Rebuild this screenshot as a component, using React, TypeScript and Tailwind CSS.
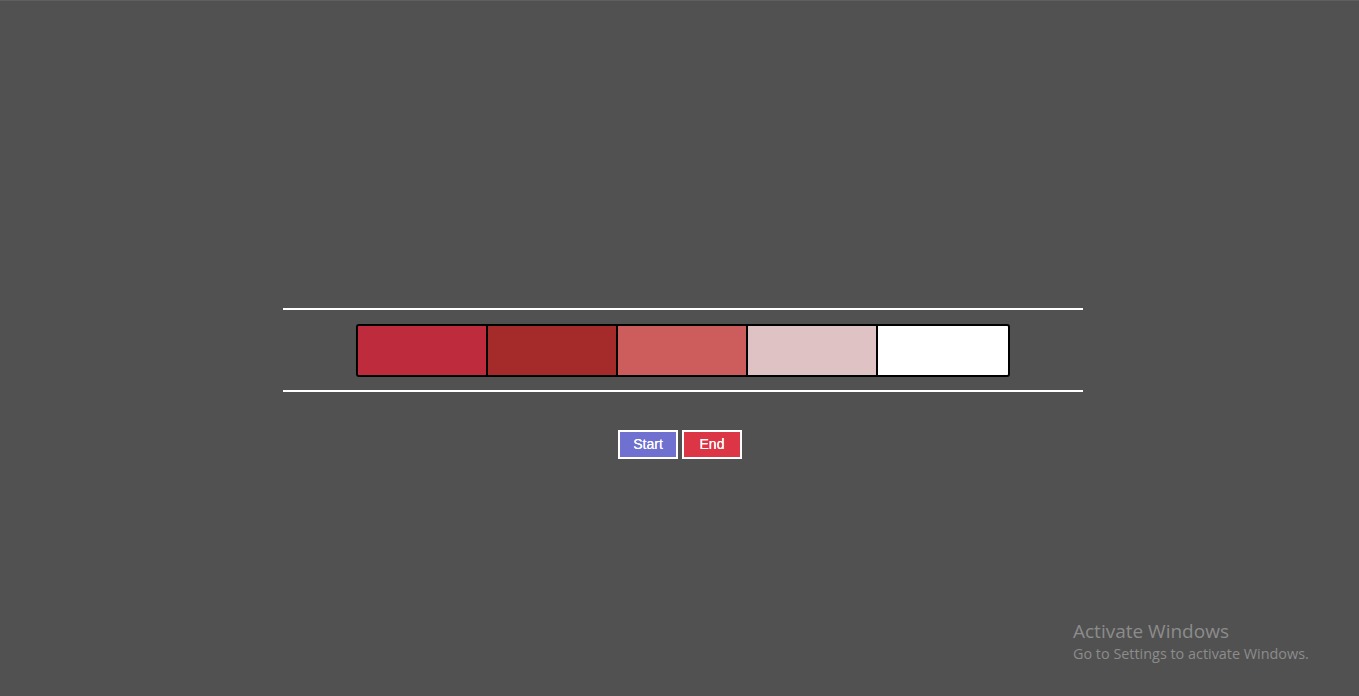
import React from "react";

const swatches = ["#be2b3c", "#a52a2a", "#cd5c5c", "#dec2c4", "#ffffff"];
const widths = ["w-[128px]", "w-[130px]", "w-[130px]", "w-[130px]", "flex-1"];

export default function App() {
  return (
    <div
      className="relative h-[696px] w-full overflow-hidden bg-[#515151] border-t border-[#5f5f5f]"
      style={{ fontFamily: '"Liberation Sans", Arial, sans-serif' }}
    >
      <div className="flex flex-col pt-[307px]">
        <div className="ml-[283px] h-[2px] w-[800px] bg-white" />
        <div className="ml-[356px] mt-[14px] flex h-[53px] w-[654px] overflow-hidden rounded-[3px] border-2 border-black">
          {swatches.map((c, i) => (
            <div
              key={c}
              className={i === 0 ? `shrink-0 ${widths[i]}` : `shrink-0 border-l-2 border-black ${widths[i]}`}
              style={{ backgroundColor: c }}
            />
          ))}
        </div>
        <div className="ml-[283px] mt-[13px] h-[2px] w-[800px] bg-white" />
        <div className="ml-[618px] mt-[38px] flex gap-[4px]">
          <button className="h-[29px] w-[60px] border-2 border-white bg-[#7070d0] text-[14px] text-white [text-shadow:0_0_0.4px_#fff]">
            Start
          </button>
          <button className="h-[29px] w-[60px] border-2 border-white bg-[#dc3545] text-[14px] text-white [text-shadow:0_0_0.4px_#fff]">
            End
          </button>
        </div>
      </div>
      <div
        className="absolute left-[1073px] top-[618px] text-[#8c8c8c]"
        style={{ fontFamily: '"Open Sans", "Noto Sans", sans-serif' }}
      >
        <div className="text-[19px] leading-[24px]">Activate Windows</div>
        <div className="text-[14.4px] leading-[21px]">Go to Settings to activate Windows.</div>
      </div>
    </div>
  );
}
